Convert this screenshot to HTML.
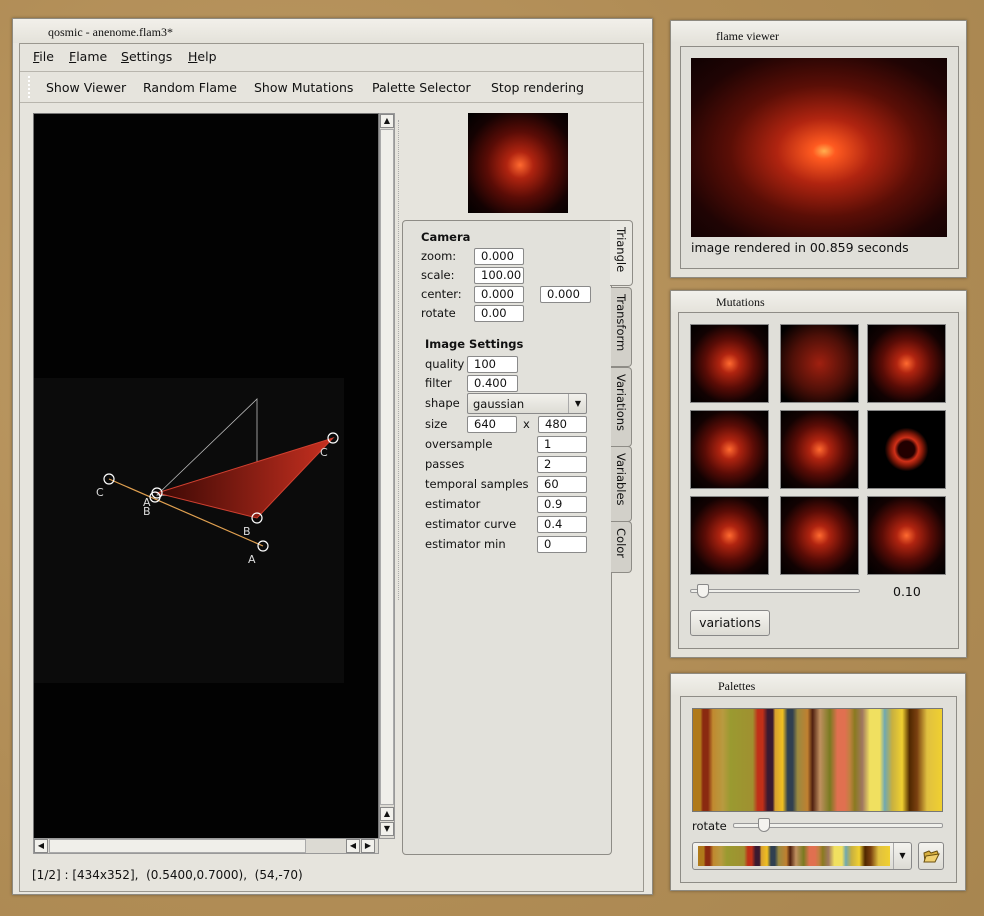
<!DOCTYPE html><html><head><style>
*{box-sizing:border-box;margin:0;padding:0}
body{width:984px;height:916px;position:relative;overflow:hidden;background:#b3925c;background-image:radial-gradient(circle at 30% 40%,#c09d68 0,#b08c55 60%,#a88650 100%);font-family:"DejaVu Sans","Liberation Sans",sans-serif;font-size:12px;color:#111}
.a{position:absolute}
.win{position:absolute;background:#e4e2da;border:1px solid #8e8a80;box-shadow:0 0 3px rgba(0,0,0,.35)}
.ttl{position:absolute;font-family:"Liberation Serif",serif;font-size:12px;color:#111}
.frm{position:absolute;border:1px solid #8e8c86;background:#e0dfd9}
.inp{position:absolute;background:#fff;border:1px solid #8a8a8a;border-radius:2px;height:17px;font-size:11.5px;padding-left:6px;line-height:15px}
.lb{position:absolute;font-size:11.5px}
.tab{position:absolute;left:611px;width:21px;background:#d2d0c9;border:1px solid #8e8c86;border-left:none;border-radius:0 4px 4px 0}
.tab span{position:absolute;left:3px;top:6px;writing-mode:vertical-rl;font-size:11.5px}
.th{position:absolute;width:79px;height:79px;border:1px solid #888;background:radial-gradient(circle at 50% 50%,#ff6a30 0,#b02410 18%,#5a0c06 45%,#120202 72%,#000 100%)}
.tb{position:absolute;top:80px;font-size:12.5px}
.mn{position:absolute;top:49px;font-size:12.5px}
.pal{background:linear-gradient(90deg,#b07a1a 0,#b07a1a 3%,#8a2a10 4%,#8a2a10 6%,#c08a30 8%,#b89a40 12%,#9a9a30 15%,#a09030 24%,#c03018 26%,#c03018 28%,#3a1a30 30%,#3a1a30 32%,#d8a030 33%,#f0c020 36%,#304050 38%,#304050 40%,#9a8a40 42%,#c08030 46%,#502010 48%,#c09060 51%,#7a7a20 55%,#e07050 58%,#e07050 61%,#c08040 63%,#8a7a20 65%,#a07860 68%,#f0e060 71%,#f0e060 75%,#70a8b0 77%,#c8b040 80%,#f0d030 84%,#502800 87%,#7a4010 90%,#e0c040 94%,#f0d030 100%)}
</style></head><body>
<div class="win" style="left:12px;top:18px;width:641px;height:877px;background:#e8e6df">
<div class="a" style="left:0;top:0;width:639px;height:24px;background:linear-gradient(#f2f0ea,#e4e2da)"></div>
<div class="ttl" style="left:35px;top:6px">qosmic - anenome.flam3*</div>
<div class="a" style="left:6px;top:24px;width:625px;height:849px;border:1px solid #9a978f;background:#e6e4dd"></div>
</div>
<div class="mn" style="left:33px"><u>F</u>ile</div><div class="mn" style="left:69px"><u>F</u>lame</div><div class="mn" style="left:121px"><u>S</u>ettings</div><div class="mn" style="left:188px"><u>H</u>elp</div>
<div class="a" style="left:20px;top:71px;width:623px;height:1px;background:#b8b5ad"></div>
<div class="a" style="left:20px;top:102px;width:623px;height:1px;background:#b8b5ad"></div>
<div class="a" style="left:28px;top:76px;width:4px;height:22px;border-left:2px dotted #fff"></div>
<div class="tb" style="left:46px">Show Viewer</div><div class="tb" style="left:143px">Random Flame</div><div class="tb" style="left:254px">Show Mutations</div><div class="tb" style="left:372px">Palette Selector</div><div class="tb" style="left:491px">Stop rendering</div>
<div class="a" style="left:33px;top:113px;width:346px;height:726px;background:#020202;border:1px solid #777"></div>
<div class="a" style="left:34px;top:378px;width:310px;height:305px;background:#0b0b0b"></div>
<svg class="a" style="left:0;top:0" width="400" height="860">
<polygon points="157,495 257,399 257,499" fill="none" stroke="#bbb" stroke-width="0.8"/>
<defs><linearGradient id="g" x1="0" y1="0" x2="1" y2="0"><stop offset="0" stop-color="#3a0804"/><stop offset="1" stop-color="#c83020"/></linearGradient></defs>
<polygon points="157,493 333,438 257,518" fill="url(#g)" stroke="#d04030"/>
<line x1="109" y1="479" x2="263" y2="546" stroke="#e0a050" stroke-width="1.2"/>
<g fill="none" stroke="#fff" stroke-width="1.2"><circle cx="109" cy="479" r="5"/><circle cx="263" cy="546" r="5"/><circle cx="157" cy="493" r="5"/><circle cx="155" cy="497" r="5"/><circle cx="333" cy="438" r="5"/><circle cx="257" cy="518" r="5"/></g>
<g fill="#ddd" font-size="11" font-family="DejaVu Sans"><text x="96" y="496">C</text><text x="143" y="506">A</text><text x="143" y="515">B</text><text x="320" y="456">C</text><text x="243" y="535">B</text><text x="248" y="563">A</text></g>
</svg>
<div class="a" style="left:379px;top:113px;width:16px;height:726px;background:#dcdad3;border:1px solid #999"></div>
<div class="a" style="left:380px;top:114px;width:14px;height:14px;background:#f2f1ec;border:1px solid #888;font-size:8px;text-align:center;line-height:12px">▲</div>
<div class="a" style="left:380px;top:129px;width:14px;height:676px;background:#f0efea;border:1px solid #aaa"></div>
<div class="a" style="left:380px;top:807px;width:14px;height:14px;background:#f2f1ec;border:1px solid #888;font-size:8px;text-align:center;line-height:12px">▲</div>
<div class="a" style="left:380px;top:822px;width:14px;height:14px;background:#f2f1ec;border:1px solid #888;font-size:8px;text-align:center;line-height:12px">▼</div>
<div class="a" style="left:33px;top:838px;width:346px;height:16px;background:#dcdad3;border:1px solid #999"></div>
<div class="a" style="left:34px;top:839px;width:14px;height:14px;background:#f2f1ec;border:1px solid #888;font-size:8px;text-align:center;line-height:12px">◀</div>
<div class="a" style="left:49px;top:839px;width:257px;height:14px;background:#f0efea;border:1px solid #aaa"></div>
<div class="a" style="left:346px;top:839px;width:14px;height:14px;background:#f2f1ec;border:1px solid #888;font-size:8px;text-align:center;line-height:12px">◀</div>
<div class="a" style="left:361px;top:839px;width:14px;height:14px;background:#f2f1ec;border:1px solid #888;font-size:8px;text-align:center;line-height:12px">▶</div>
<div class="a" style="left:398px;top:120px;width:3px;height:480px;border-left:1px dotted #aaa"></div>
<div class="a" style="left:468px;top:113px;width:100px;height:100px;background:radial-gradient(circle at 52% 52%,#ff6a30 0,#b02410 18%,#5a0c06 45%,#140202 75%,#000 100%)"></div>
<div class="a" style="left:402px;top:220px;width:210px;height:635px;border:1px solid #8e8c86;border-radius:4px 0 4px 4px;background:#e2e1db"></div>
<div class="tab" style="top:287px;height:80px"><span>Transform</span></div>
<div class="tab" style="top:367px;height:80px"><span>Variations</span></div>
<div class="tab" style="top:446px;height:76px"><span>Variables</span></div>
<div class="tab" style="top:521px;height:52px"><span>Color</span></div>
<div class="tab" style="top:220px;height:66px;background:#e8e7e1;left:610px;width:23px"><span style="left:4px">Triangle</span></div>
<div class="lb" style="left:421px;top:230px;font-weight:bold">Camera</div>
<div class="lb" style="left:421px;top:249px">zoom:</div><div class="inp" style="left:474px;top:248px;width:50px">0.000</div>
<div class="lb" style="left:421px;top:268px">scale:</div><div class="inp" style="left:474px;top:267px;width:50px">100.00</div>
<div class="lb" style="left:421px;top:287px">center:</div><div class="inp" style="left:474px;top:286px;width:50px">0.000</div><div class="inp" style="left:540px;top:286px;width:51px">0.000</div>
<div class="lb" style="left:421px;top:306px">rotate</div><div class="inp" style="left:474px;top:305px;width:50px">0.00</div>
<div class="lb" style="left:425px;top:337px;font-weight:bold">Image Settings</div>
<div class="lb" style="left:425px;top:357px">quality</div><div class="inp" style="left:467px;top:356px;width:51px">100</div>
<div class="lb" style="left:425px;top:376px">filter</div><div class="inp" style="left:467px;top:375px;width:51px">0.400</div>
<div class="lb" style="left:425px;top:396px">shape</div><div class="a" style="left:467px;top:393px;width:120px;height:21px;border:1px solid #8a8a8a;border-radius:2px;background:linear-gradient(#f2f1ec,#dddcd5);font-size:11.5px;padding:3px 5px">gaussian<span class="a" style="left:100px;top:0;width:19px;height:19px;border-left:1px solid #aaa;font-size:8px;text-align:center;line-height:19px">▼</span></div>
<div class="lb" style="left:425px;top:417px">size</div><div class="inp" style="left:467px;top:416px;width:50px">640</div><div class="lb" style="left:523px;top:417px">x</div><div class="inp" style="left:538px;top:416px;width:49px">480</div>
<div class="lb" style="left:425px;top:437px">oversample</div><div class="inp" style="left:537px;top:436px;width:50px">1</div>
<div class="lb" style="left:425px;top:457px">passes</div><div class="inp" style="left:537px;top:456px;width:50px">2</div>
<div class="lb" style="left:425px;top:477px">temporal samples</div><div class="inp" style="left:537px;top:476px;width:50px">60</div>
<div class="lb" style="left:425px;top:497px">estimator</div><div class="inp" style="left:537px;top:496px;width:50px">0.9</div>
<div class="lb" style="left:425px;top:517px">estimator curve</div><div class="inp" style="left:537px;top:516px;width:50px">0.4</div>
<div class="lb" style="left:425px;top:537px">estimator min</div><div class="inp" style="left:537px;top:536px;width:50px">0</div>
<div class="a" style="left:32px;top:868px;font-size:12px">[1/2] : [434x352], &nbsp;(0.5400,0.7000), &nbsp;(54,-70)</div>
<div class="win" style="left:670px;top:20px;width:297px;height:258px"><div class="a" style="left:0;top:0;width:295px;height:22px;background:linear-gradient(#f2f1ec,#e4e2da)"></div></div>
<div class="ttl" style="left:716px;top:29px">flame viewer</div>
<div class="frm" style="left:680px;top:46px;width:279px;height:223px"></div>
<div class="a" style="left:691px;top:58px;width:256px;height:179px;background:radial-gradient(ellipse at 52% 52%,#ffb050 0,#ff5a20 6%,#b02410 25%,#5a0e06 50%,#200404 78%,#100202 100%)"></div>
<div class="a" style="left:691px;top:240px;font-size:12.5px">image rendered in 00.859 seconds</div>
<div class="win" style="left:670px;top:290px;width:297px;height:368px"><div class="a" style="left:0;top:0;width:295px;height:22px;background:linear-gradient(#f2f1ec,#e4e2da)"></div></div>
<div class="ttl" style="left:716px;top:295px">Mutations</div>
<div class="frm" style="left:678px;top:312px;width:281px;height:337px"></div>
<div class="th" style="left:690px;top:324px"></div><div class="th" style="left:780px;top:324px;background:radial-gradient(circle,#a02010 0,#501008 50%,#000 90%)"></div><div class="th" style="left:867px;top:324px"></div>
<div class="th" style="left:690px;top:410px"></div><div class="th" style="left:780px;top:410px"></div><div class="th" style="left:867px;top:410px;background:radial-gradient(circle,#200 0,#200 15%,#d03018 22%,#801808 30%,#000 40%)"></div>
<div class="th" style="left:690px;top:496px"></div><div class="th" style="left:780px;top:496px"></div><div class="th" style="left:867px;top:496px"></div>
<div class="a" style="left:690px;top:589px;width:170px;height:4px;border:1px solid #999;border-radius:2px;background:#f0f0ec"></div>
<div class="a" style="left:697px;top:584px;width:12px;height:14px;border:1px solid #888;border-radius:2px 2px 6px 6px;background:#f4f3ef"></div>
<div class="a" style="left:893px;top:584px;font-size:12.5px">0.10</div>
<div class="a" style="left:690px;top:610px;width:80px;height:26px;border:1px solid #888;border-radius:3px;background:linear-gradient(#f6f5f1,#dcdbd4);font-size:12.5px;text-align:center;line-height:24px">variations</div>
<div class="win" style="left:670px;top:673px;width:296px;height:218px"><div class="a" style="left:0;top:0;width:294px;height:22px;background:linear-gradient(#f2f1ec,#e4e2da)"></div></div>
<div class="ttl" style="left:718px;top:679px">Palettes</div>
<div class="frm" style="left:680px;top:696px;width:277px;height:187px"></div>
<div class="a pal" style="left:692px;top:708px;width:251px;height:104px;border:1px solid #777"></div>
<div class="a" style="left:692px;top:819px;font-size:11.5px">rotate</div>
<div class="a" style="left:733px;top:823px;width:210px;height:5px;border:1px solid #999;border-radius:2px;background:#f0f0ec"></div>
<div class="a" style="left:758px;top:818px;width:12px;height:14px;border:1px solid #888;border-radius:2px 2px 6px 6px;background:#f4f3ef"></div>
<div class="a" style="left:692px;top:842px;width:220px;height:28px;border:1px solid #888;border-radius:3px;background:linear-gradient(#f4f3ef,#dcdbd4)"></div>
<div class="a pal" style="left:698px;top:846px;width:192px;height:20px"></div>
<div class="a" style="left:893px;top:843px;width:18px;height:26px;border-left:1px solid #aaa;font-size:8px;text-align:center;line-height:26px">▼</div>
<div class="a" style="left:918px;top:842px;width:26px;height:28px;border:1px solid #888;border-radius:3px;background:linear-gradient(#f4f3ef,#dcdbd4)"></div>
<svg class="a" style="left:922px;top:848px" width="18" height="16"><path d="M2 5 L7 3 L9 5 L15 3 L16 5 L13 13 L3 14 Z" fill="#d8b040" stroke="#6a5010"/><path d="M4 8 L17 6 L13 14 L2 14 Z" fill="#f0d070" stroke="#6a5010"/></svg>
</body></html>
